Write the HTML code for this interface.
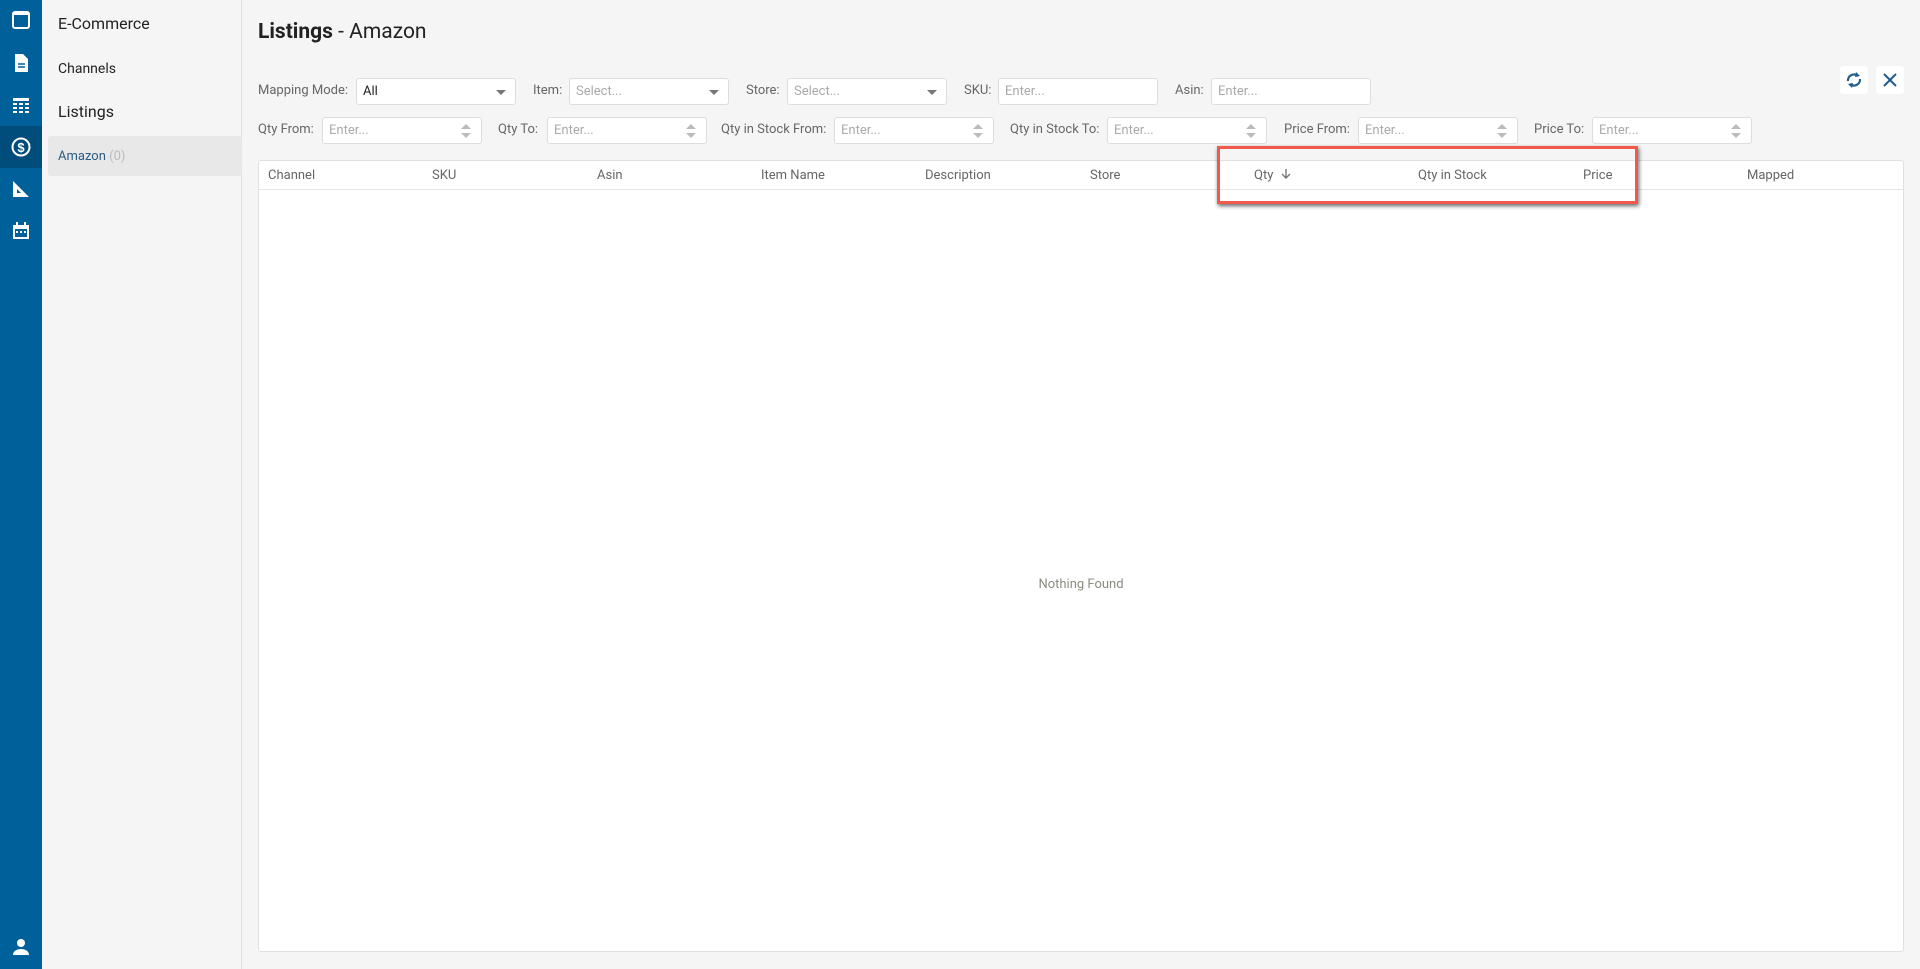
<!DOCTYPE html>
<html><head><style>
*{box-sizing:border-box;margin:0;padding:0}
body{width:1920px;height:969px;background:#f5f5f5;font-family:Roboto,"Liberation Sans",sans-serif;position:relative;overflow:hidden;color:#222}
.sb{position:absolute;left:0;top:0;width:42px;height:969px;background:#00619a}
.sb .act{position:absolute;left:0;top:126px;width:42px;height:42px;background:#004c7a}
.sb svg{position:absolute;left:11px;width:20px;height:20px}
.nav{position:absolute;left:42px;top:0;width:200px;height:969px;background:#f5f5f5;border-right:1px solid #e0e0e0}
.abs{position:absolute;white-space:nowrap}
.lbl{font-size:13px;color:#666}
.inp{position:absolute;height:27px;background:#fff;border:1px solid #ddd;border-radius:3px;font-size:13px;color:#aaa;padding:5px 6px}
.inp.sel:after{content:"";position:absolute;right:9px;top:11px;border-left:5px solid transparent;border-right:5px solid transparent;border-top:5px solid #777}
.inp.num:before{content:"";position:absolute;right:10px;top:6px;border-left:5px solid transparent;border-right:5px solid transparent;border-bottom:5px solid #bbb}
.inp.num:after{content:"";position:absolute;right:10px;top:15px;border-left:5px solid transparent;border-right:5px solid transparent;border-top:5px solid #bbb}
.tbl{position:absolute;left:258px;top:160px;width:1646px;height:792px;background:#fff;border:1px solid #e0e0e0;border-radius:3px}
.th{position:absolute;top:0;height:29px;width:100%;border-bottom:1px solid #e5e5e5}
.th span{position:absolute;top:7px;font-size:13px;color:#666}
.btn{position:absolute;top:66px;width:28px;height:28px;background:#fff;border-radius:3px}
</style></head><body>
<div class="sb"><div class="act"></div>
<svg style="top:10px" viewBox="0 0 20 20"><rect x="2" y="2" width="16" height="16" rx="2" fill="none" stroke="#fff" stroke-width="2"/><rect x="2" y="2" width="16" height="3" fill="#fff"/></svg>
<svg style="top:53px" viewBox="0 0 20 20"><path d="M4 1h8l5 5v13H4z" fill="#fff"/><path d="M7 11h7M7 14h7" stroke="#00619a" stroke-width="1.5"/></svg>
<svg style="top:95px" viewBox="0 0 20 20" fill="#fff"><rect x="2" y="3" width="16" height="3"/><rect x="2" y="8" width="4" height="2"/><rect x="8" y="8" width="4" height="2"/><rect x="14" y="8" width="4" height="2"/><rect x="2" y="12" width="4" height="2"/><rect x="8" y="12" width="4" height="2"/><rect x="14" y="12" width="4" height="2"/><rect x="2" y="16" width="4" height="2"/><rect x="8" y="16" width="4" height="2"/><rect x="14" y="16" width="4" height="2"/></svg>
<svg style="top:137px" viewBox="0 0 20 20"><circle cx="10" cy="10" r="8.5" fill="none" stroke="#fff" stroke-width="2"/><text x="10" y="15" font-size="13" font-weight="bold" fill="#fff" text-anchor="middle" font-family="Liberation Sans">$</text></svg>
<svg style="top:179px" viewBox="0 0 20 20"><path d="M2 2v16h16z" fill="#fff"/><path d="M6 10v4h4z" fill="#00619a"/></svg>
<svg style="top:221px" viewBox="0 0 20 20"><rect x="2" y="4" width="16" height="14" fill="#fff"/><rect x="5" y="1" width="2" height="4" fill="#fff"/><rect x="13" y="1" width="2" height="4" fill="#fff"/><rect x="4" y="8" width="12" height="8" fill="#00619a"/><rect x="5" y="10" width="2" height="2" fill="#fff"/><rect x="9" y="10" width="2" height="2" fill="#fff"/><rect x="13" y="10" width="2" height="2" fill="#fff"/></svg>
<svg style="top:937px" viewBox="0 0 20 20" fill="#fff"><circle cx="10" cy="6" r="4"/><path d="M2 18c0-4 4-6 8-6s8 2 8 6z"/></svg>
</div>
<div class="nav">
<div class="abs" style="left:16px;top:14px;font-size:16px;color:#222">E-Commerce</div>
<div class="abs" style="left:16px;top:61px;font-size:14px;color:#222">Channels</div>
<div class="abs" style="left:16px;top:102px;font-size:16px;color:#222">Listings</div>
<div style="position:absolute;left:6px;top:136px;width:194px;height:40px;background:#e8e8e8;border-radius:3px"></div>
<div class="abs" style="left:16px;top:149px;font-size:13px;color:#2a5c86">Amazon <span style="color:#bbb">(0)</span></div>
</div>
<div class="abs" style="left:258px;top:20px;font-size:21px;color:#222"><b>Listings</b> - Amazon</div>
<div class="abs lbl" style="left:258px;top:83px">Mapping Mode:</div>
<div class="inp sel" style="left:356px;top:78px;width:160px;color:#222">All</div>
<div class="abs lbl" style="left:533px;top:83px">Item:</div>
<div class="inp sel" style="left:569px;top:78px;width:160px">Select...</div>
<div class="abs lbl" style="left:746px;top:83px">Store:</div>
<div class="inp sel" style="left:787px;top:78px;width:160px">Select...</div>
<div class="abs lbl" style="left:964px;top:83px">SKU:</div>
<div class="inp" style="left:998px;top:78px;width:160px">Enter...</div>
<div class="abs lbl" style="left:1175px;top:83px">Asin:</div>
<div class="inp" style="left:1211px;top:78px;width:160px">Enter...</div>
<div class="abs lbl" style="left:258px;top:122px">Qty From:</div>
<div class="inp num" style="left:322px;top:117px;width:160px">Enter...</div>
<div class="abs lbl" style="left:498px;top:122px">Qty To:</div>
<div class="inp num" style="left:547px;top:117px;width:160px">Enter...</div>
<div class="abs lbl" style="left:721px;top:122px">Qty in Stock From:</div>
<div class="inp num" style="left:834px;top:117px;width:160px">Enter...</div>
<div class="abs lbl" style="left:1010px;top:122px">Qty in Stock To:</div>
<div class="inp num" style="left:1107px;top:117px;width:160px">Enter...</div>
<div class="abs lbl" style="left:1284px;top:122px">Price From:</div>
<div class="inp num" style="left:1358px;top:117px;width:160px">Enter...</div>
<div class="abs lbl" style="left:1534px;top:122px">Price To:</div>
<div class="inp num" style="left:1592px;top:117px;width:160px">Enter...</div>
<div class="btn" style="left:1840px"><svg width="28" height="28" viewBox="0 0 28 28"><path d="M8 15a6 6 0 0 1 10-5" fill="none" stroke="#1e5d8c" stroke-width="2.2"/><path d="M20 13a6 6 0 0 1-10 5" fill="none" stroke="#1e5d8c" stroke-width="2.2"/><path d="M16 6l4 4-5 1z" fill="#1e5d8c"/><path d="M12 22l-4-4 5-1z" fill="#1e5d8c"/></svg></div>
<div class="btn" style="left:1876px"><svg width="28" height="28" viewBox="0 0 28 28"><path d="M8 8l12 12M20 8L8 20" stroke="#1e5d8c" stroke-width="2"/></svg></div>
<div class="tbl"><div class="th">
<span style="left:9px">Channel</span><span style="left:173px">SKU</span><span style="left:338px">Asin</span><span style="left:502px">Item Name</span><span style="left:666px">Description</span><span style="left:831px">Store</span><span style="left:995px">Qty <svg width="12" height="12" viewBox="0 0 12 12" style="vertical-align:-1px;margin-left:3px"><path d="M6 1v9M2 6l4 4 4-4" fill="none" stroke="#777" stroke-width="1.4"/></svg></span><span style="left:1159px">Qty in Stock</span><span style="left:1324px">Price</span><span style="left:1488px">Mapped</span>
</div>
<div class="abs" style="left:0;width:100%;text-align:center;top:416px;font-size:13px;color:#8a8a80">Nothing Found</div>
</div>
<div style="position:absolute;left:1217px;top:146px;width:421px;height:58px;border:3px solid #ef5a4c;box-shadow:1px 2px 4px rgba(0,0,0,.6)"></div>
</body></html>
